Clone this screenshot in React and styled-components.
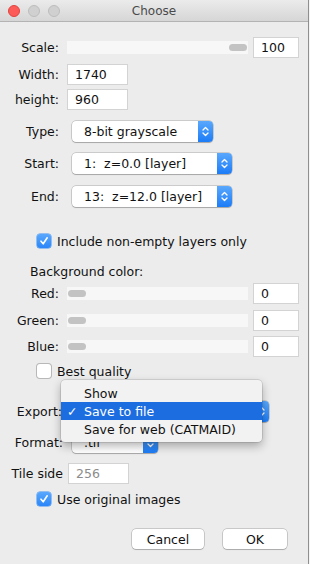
import React from "react";
import styled, { createGlobalStyle } from "styled-components";

const Global = createGlobalStyle`
  html, body { margin: 0; padding: 0; background: #f4f4f4; }
  body { font-family: "DejaVu Sans", "Liberation Sans", sans-serif; font-size: 12.5px; color: #111; }
  * { box-sizing: border-box; }
`;

const Window = styled.div`
  width: 309px;
  height: 564px;
  background: #ececec;
  border-right: 1px solid #8f8f8f;
  display: flex;
  flex-direction: column;
  overflow: hidden;
`;

const TitleBar = styled.div`
  height: 22px;
  flex: none;
  display: flex;
  align-items: center;
  position: relative;
  background: linear-gradient(#ebebeb, #d6d6d6);
  border-bottom: 1px solid #b3b3b3;
  padding-left: 8px;
  gap: 8px;
`;

const Light = styled.span`
  width: 12px;
  height: 12px;
  border-radius: 50%;
  background: ${(p) => (p.$red ? "#fc5b57" : "#d0d0d0")};
  border: 1px solid ${(p) => (p.$red ? "#e0443e" : "#bdbdbd")};
`;

const Title = styled.div`
  position: absolute;
  left: 0;
  right: 0;
  top: 0;
  bottom: 0;
  display: flex;
  align-items: center;
  justify-content: center;
  color: #4a4a4a;
  font-size: 12px;
  pointer-events: none;
`;

const Body = styled.div`
  display: flex;
  flex-direction: column;
`;

const Row = styled.div`
  display: flex;
  align-items: center;
  height: ${(p) => p.$h || 21}px;
  margin-top: ${(p) => p.$mt || 0}px;
  position: relative;
`;

const Label = styled.div`
  width: ${(p) => p.$w || 59}px;
  margin-right: ${(p) => p.$gap || 8}px;
  text-align: right;
  white-space: nowrap;
  flex: none;
`;

const Heading = styled.div`
  padding-left: 30px;
`;

const Track = styled.div`
  width: 181px;
  height: 13px;
  background: #f7f7f7;
  position: relative;
  flex: none;
`;

const Knob = styled.div`
  position: absolute;
  top: 3px;
  ${(p) => (p.$end ? "right: 1px;" : "left: 1px;")}
  width: 18px;
  height: 7px;
  border-radius: 4px;
  background: #c3c3c3;
`;

const Field = styled.div`
  width: ${(p) => p.$w || 61}px;
  height: 21px;
  margin-left: ${(p) => p.$ml || 0}px;
  background: #fff;
  border: 1px solid #d3d3d3;
  padding-left: 7px;
  display: flex;
  align-items: center;
  color: ${(p) => (p.$disabled ? "#8c8c8c" : "#111")};
  flex: none;
`;

const Popup = styled.div`
  width: ${(p) => p.$w}px;
  height: 21px;
  display: flex;
  align-items: stretch;
  background: #fff;
  border-radius: 4px;
  box-shadow: 0 0 0 0.5px rgba(0,0,0,0.28), 0 1px 1px rgba(0,0,0,0.18);
  flex: none;
`;

const PopupText = styled.div`
  flex: 1;
  display: flex;
  align-items: center;
  padding-left: 12px;
  white-space: pre;
`;

const Stepper = styled.div`
  width: 15px;
  border-radius: 0 4px 4px 0;
  background: linear-gradient(#5aa8fd, #1c7cf7);
  display: flex;
  align-items: center;
  justify-content: center;
`;

const CheckRow = styled.label`
  display: flex;
  align-items: center;
  padding-left: 37px;
  height: 14px;
  margin-top: ${(p) => p.$mt || 0}px;
  gap: 6px;
`;

const Box = styled.span`
  width: 14px;
  height: 14px;
  border-radius: 3px;
  flex: none;
  display: flex;
  align-items: center;
  justify-content: center;
  background: ${(p) => (p.$on ? "linear-gradient(#5aa8fd, #2b86f8)" : "#fff")};
  box-shadow: ${(p) => (p.$on ? "0 0 0 0.5px #3a8ef0" : "0 0 0 1px #b8b8b8")};
`;

const Menu = styled.div`
  position: absolute;
  left: 61px;
  top: -21px;
  width: 201px;
  padding: 4px 0;
  background: #f2f2f2;
  border-radius: 4px;
  box-shadow: 0 0 0 0.5px rgba(0,0,0,0.2), 0 4px 10px rgba(0,0,0,0.3);
  z-index: 5;
`;

const MenuItem = styled.div`
  height: 18px;
  display: flex;
  align-items: center;
  background: ${(p) => (p.$active ? "#1c6ee0" : "transparent")};
  color: ${(p) => (p.$active ? "#fff" : "#111")};
`;

const Check = styled.span`
  width: 23px;
  padding-left: 6px;
  flex: none;
`;

const ButtonRow = styled.div`
  display: flex;
  margin-top: 23px;
  padding-left: 132px;
  gap: 19px;
`;

const Button = styled.div`
  width: ${(p) => p.$w}px;
  height: 20px;
  background: #fff;
  border-radius: 4px;
  box-shadow: 0 0 0 0.5px rgba(0,0,0,0.3), 0 1px 1px rgba(0,0,0,0.15);
  display: flex;
  align-items: center;
  justify-content: center;
`;

const Chevrons = () => (
  <svg width="9" height="13" viewBox="0 0 9 13">
    <path d="M2 5 L4.5 2.5 L7 5 M2 8 L4.5 10.5 L7 8" fill="none" stroke="#fff" strokeWidth="1.3" strokeLinecap="round" strokeLinejoin="round" />
  </svg>
);

const Tick = () => (
  <svg width="10" height="10" viewBox="0 0 10 10">
    <path d="M2 5.2 L4.2 7.8 L8.2 1.8" fill="none" stroke="#fff" strokeWidth="1.6" strokeLinecap="round" strokeLinejoin="round" />
  </svg>
);

const Select = ({ w, children }) => (
  <Popup $w={w}>
    <PopupText>{children}</PopupText>
    <Stepper>
      <Chevrons />
    </Stepper>
  </Popup>
);

const Slider = ({ end }) => (
  <Track>
    <Knob $end={end} />
  </Track>
);

export default function App() {
  return (
    <>
      <Global />
      <Window>
        <TitleBar>
          <Light $red />
          <Light />
          <Light />
          <Title>Choose</Title>
        </TitleBar>
        <Body>
          <Row $mt={15} $h={20}>
            <Label>Scale:</Label>
            <Slider end />
            <Field $w={46} $ml={5}>100</Field>
          </Row>
          <Row $mt={7}>
            <Label>Width:</Label>
            <Field>1740</Field>
          </Row>
          <Row $mt={4}>
            <Label>height:</Label>
            <Field>960</Field>
          </Row>
          <Row $mt={11}>
            <Label $gap={13}>Type:</Label>
            <Select w={141}>8-bit grayscale</Select>
          </Row>
          <Row $mt={11}>
            <Label $gap={13}>Start:</Label>
            <Select w={160}>1:  z=0.0 [layer]</Select>
          </Row>
          <Row $mt={12}>
            <Label $gap={13}>End:</Label>
            <Select w={160}>13:  z=12.0 [layer]</Select>
          </Row>
          <CheckRow $mt={27}>
            <Box $on><Tick /></Box>
            Include non-empty layers only
          </CheckRow>
          <Row $mt={15} $h={16}>
            <Heading>Background color:</Heading>
          </Row>
          <Row $mt={4}>
            <Label>Red:</Label>
            <Slider />
            <Field $w={46} $ml={5}>0</Field>
          </Row>
          <Row $mt={6}>
            <Label>Green:</Label>
            <Slider />
            <Field $w={46} $ml={5}>0</Field>
          </Row>
          <Row $mt={5}>
            <Label>Blue:</Label>
            <Slider />
            <Field $w={46} $ml={5}>0</Field>
          </Row>
          <CheckRow $mt={7}>
            <Box />
            Best quality
          </CheckRow>
          <Row $mt={23}>
            <Label $w={62} $gap={10}>Export:</Label>
            <Select w={197}>Save to file</Select>
            <Menu>
              <MenuItem><Check /> Show</MenuItem>
              <MenuItem $active><Check>✓</Check> Save to file</MenuItem>
              <MenuItem><Check /> Save for web (CATMAID)</MenuItem>
            </Menu>
          </Row>
          <Row $mt={10}>
            <Label $w={63} $gap={9}>Format:</Label>
            <Select w={86}>.tif</Select>
          </Row>
          <Row $mt={10}>
            <Label $w={63} $gap={5}>Tile side</Label>
            <Field $disabled>256</Field>
          </Row>
          <CheckRow $mt={8}>
            <Box $on><Tick /></Box>
            Use original images
          </CheckRow>
          <ButtonRow>
            <Button $w={72}>Cancel</Button>
            <Button $w={64}>OK</Button>
          </ButtonRow>
        </Body>
      </Window>
    </>
  );
}
